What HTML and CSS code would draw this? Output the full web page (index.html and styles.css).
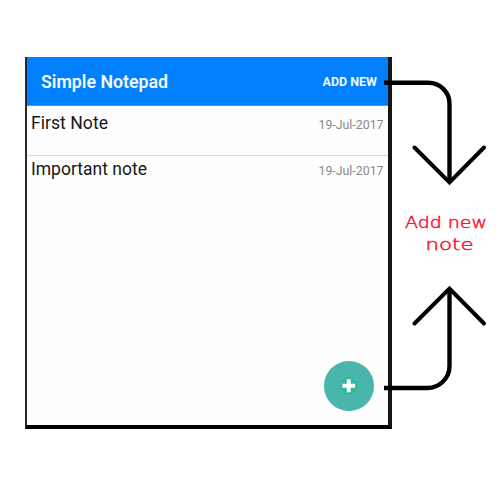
FILE: index.html
```
<!DOCTYPE html>
<html lang="en">
<head>
<meta charset="utf-8">
<title>Simple Notepad</title>
<link rel="stylesheet" href="styles.css">
</head>
<body>
<main class="phone">
  <header class="bar">
    <svg class="title" viewBox="0 0 130 24"><text x="0" y="19" textLength="127" lengthAdjust="spacingAndGlyphs">Simple Notepad</text></svg>
    <svg class="action" viewBox="0 0 56 20"><text x="0.500" y="15" textLength="54.500" lengthAdjust="spacingAndGlyphs">ADD NEW</text></svg>
  </header>
  <ul class="notes">
    <li class="note">
      <svg class="name" viewBox="0 0 120 24"><text x="0" y="18" textLength="77" lengthAdjust="spacingAndGlyphs">First Note</text></svg>
      <svg class="date" viewBox="0 0 66 20"><text x="0.500" y="14" textLength="65" lengthAdjust="spacingAndGlyphs">19-Jul-2017</text></svg>
    </li>
    <li class="note">
      <svg class="name" viewBox="0 0 120 24"><text x="0" y="18" textLength="116" lengthAdjust="spacingAndGlyphs">Important note</text></svg>
      <svg class="date" viewBox="0 0 66 20"><text x="0.500" y="14" textLength="65" lengthAdjust="spacingAndGlyphs">19-Jul-2017</text></svg>
    </li>
  </ul>
  <div class="fab">
    <svg viewBox="0 0 50 50"><circle class="glow" cx="25" cy="25" r="9"/><path d="M25 18.500v13M18.500 25h13"/></svg>
  </div>
</main>
<svg class="callout" viewBox="0 0 500 500">
  <path d="M384 82.700h44.500a21 21 0 0 1 21 21V181"/>
  <path class="head" d="M414.500 147.500l35 35 34.500-35"/>
  <path d="M384 388h43.500a22 22 0 0 0 22-22V290"/>
  <path class="head" d="M414.500 323.500l35-35 34.500 35"/>
  <text x="405" y="228" textLength="82" lengthAdjust="spacingAndGlyphs">Add new</text>
  <text x="425.500" y="249.500" textLength="48" lengthAdjust="spacingAndGlyphs">note</text>
</svg>
</body>
</html>
```
FILE: styles.css
```
* { box-sizing: border-box; }
body {
  margin: 0;
  height: 500px;
  padding: 57px 0 0 25px;
  background: #fff;
  font-family: Roboto, sans-serif;
  overflow: hidden;
}
.phone {
  position: relative;
  width: 367px;
  height: 372px;
  border: solid #161617;
  border-width: 0 4px 4px 2px;
  border-left-color: #29292b;
  border-bottom-color: #000;
  background: #fefefe;
}
.bar {
  display: flex;
  align-items: center;
  justify-content: space-between;
  height: 49px;
  padding: 0 10px 0 14px;
  background: #0080ff;
  border-bottom: 1px solid #469fee;
}
svg { display: block; }
.title { width: 130px; height: 24px; fill: #f4faff; font-size: 18px; font-weight: 600; }
.action { width: 56px; height: 20px; fill: #f0f8ff; font-size: 12px; font-weight: 700; }
.notes { margin: 0; padding: 0; list-style: none; }
.note {
  display: flex;
  justify-content: space-between;
  height: 50px;
  padding: 5px 4px 0;
}
.note:first-child { border-bottom: 1px solid #d8d8d8; }
.note + .note { padding-top: 1px; }
.name { width: 120px; height: 24px; fill: #171717; font-size: 18px; }
.date { width: 66px; height: 20px; margin-top: 4px; fill: #888; font-size: 12.5px; font-weight: 400; }
.fab {
  position: absolute;
  right: 14.5px;
  bottom: 14.5px;
  width: 49.5px;
  height: 49.5px;
  border-radius: 50%;
  background: #4ab5ab;
}
.fab path { fill: none; stroke: #fff; stroke-width: 4; }
.glow { fill: #32b99c; }
.callout {
  position: absolute;
  left: 0;
  top: 0;
  width: 500px;
  height: 500px;
}
.callout path { fill: none; stroke: #000; stroke-width: 4.4; }
.callout .head { stroke-linecap: round; stroke-width: 4; }
.callout text {
  fill: #ff1238;
  stroke: #ff1238;
  stroke-width: 0.5;
  font-family: "DejaVu Sans", sans-serif;
  font-weight: 200;
  font-size: 15.5px;
}
```
